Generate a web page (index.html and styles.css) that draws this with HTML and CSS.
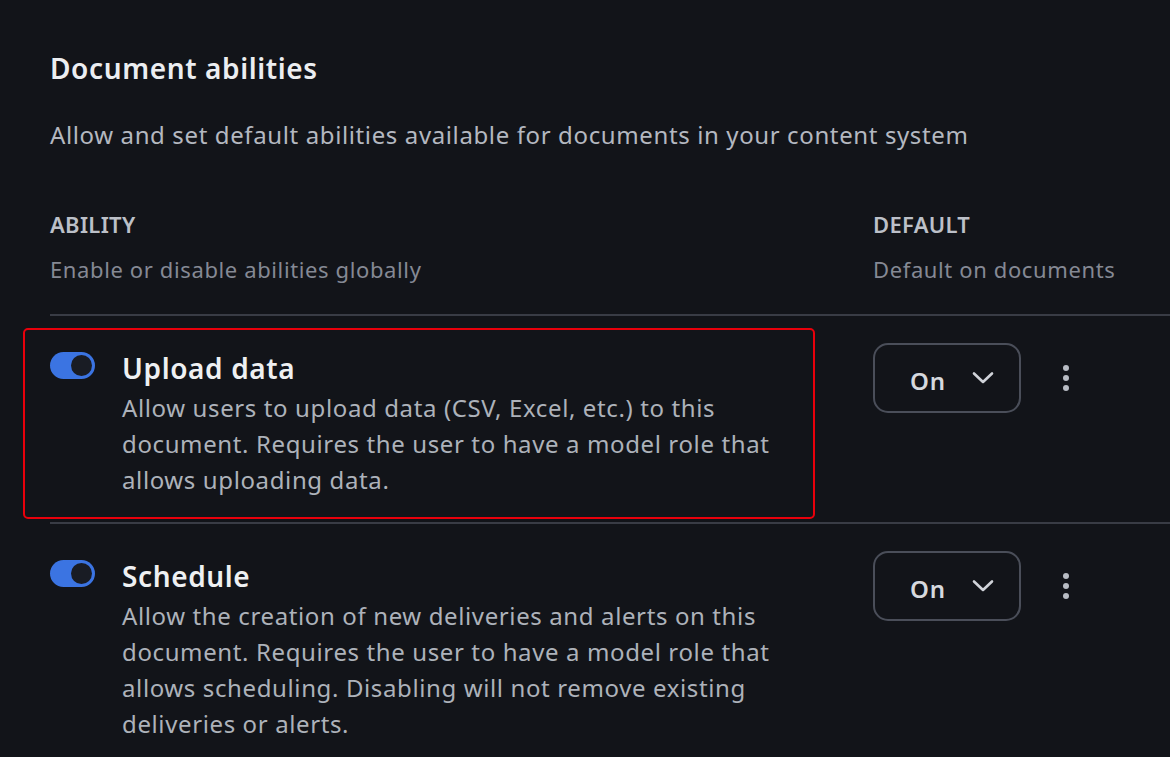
FILE: index.html
```html
<!DOCTYPE html>
<html lang="en">
  <head>
    <meta charset="UTF-8" />
    <meta name="viewport" content="width=device-width, initial-scale=1.0" />
    <title>Document abilities</title>
    <link rel="stylesheet" href="styles.css">
  </head>
  <body>
    <section class="settings">
      <h1 class="settings-title">Document abilities</h1>
      <p class="settings-intro">Allow and set default abilities available for documents in your content system</p>

      <div class="table-head">
        <div class="col-ability">
          <div class="head-label">ABILITY</div>
          <div class="head-hint">Enable or disable abilities globally</div>
        </div>
        <div class="col-default">
          <div class="head-label">DEFAULT</div>
          <div class="head-hint">Default on documents</div>
        </div>
      </div>

      <!-- ability rows -->
      <div class="ability-row">
        <div class="col-ability ability-main is-highlighted">
          <span class="toggle on"><span class="knob"></span></span>
          <div class="ability-text">
            <h3>Upload data</h3>
            <p>Allow users to upload data (CSV, Excel, etc.) to this document. Requires the user to have a model role that allows uploading data.</p>
          </div>
        </div>
        <div class="col-default ability-default">
          <button class="select">
            <span>On</span>
            <svg width="22" height="14" viewBox="0 0 22 14"><path d="M2 2.5 L11 11 L20 2.5" fill="none" stroke="currentColor" stroke-width="2.6" stroke-linecap="round" stroke-linejoin="round"/></svg>
          </button>
          <span class="kebab"><i></i><i></i><i></i></span>
        </div>
      </div>

      <div class="ability-row">
        <div class="col-ability ability-main">
          <span class="toggle on"><span class="knob"></span></span>
          <div class="ability-text">
            <h3>Schedule</h3>
            <p>Allow the creation of new deliveries and alerts on this document. Requires the user to have a model role that allows scheduling. Disabling will not remove existing deliveries or alerts.</p>
          </div>
        </div>
        <div class="col-default ability-default">
          <button class="select">
            <span>On</span>
            <svg width="22" height="14" viewBox="0 0 22 14"><path d="M2 2.5 L11 11 L20 2.5" fill="none" stroke="currentColor" stroke-width="2.6" stroke-linecap="round" stroke-linejoin="round"/></svg>
          </button>
          <span class="kebab"><i></i><i></i><i></i></span>
        </div>
      </div>
    </section>
  </body>
</html>
```

FILE: styles.css
```css
body {
  margin: 0;
  background-color: #121419;
  font-family: "Noto Sans", "Open Sans", sans-serif;
  letter-spacing: 0.62px;
  color: #e8eaed;
  overflow: hidden;
}

.settings {
  padding: 48px 0 0 50px;
}

.settings-title {
  margin: 0;
  font-size: 28px;
  line-height: 40px;
  font-weight: 600;
  color: #eceef1;
}

.settings-intro {
  margin: 29px 0 0 0;
  font-size: 24px;
  line-height: 36px;
  color: #b4b8c0;
}

.table-head,
.ability-row {
  display: grid;
  grid-template-columns: 823px 1fr;
}

.table-head {
  margin-top: 53px;
  padding-bottom: 27px;
  border-bottom: 2px solid #393c45;
}

.head-label {
  font-size: 22px;
  line-height: 36px;
  font-weight: 600;
  letter-spacing: 0.3px;
  color: #bcc0c8;
}

.head-hint {
  margin-top: 9px;
  font-size: 22px;
  line-height: 36px;
  color: #858994;
}

.ability-row {
  border-bottom: 2px solid #393c45;
}

.ability-main {
  display: flex;
  gap: 27px;
  padding: 34px 0 24px 0;
  position: relative;
}

/* red focus frame drawn over the active row */
.is-highlighted::after {
  content: "";
  position: absolute;
  left: -27px;
  top: 12px;
  right: 58px;
  bottom: 3px;
  border: 2px solid #e8000b;
  border-radius: 5px;
}

.toggle {
  flex: none;
  width: 45px;
  height: 27px;
  margin-top: 2px;
  border-radius: 14px;
  background-color: #3b74e2;
  display: flex;
  align-items: center;
  justify-content: flex-end;
  padding: 0 3px;
  box-sizing: border-box;
}

.toggle .knob {
  width: 21px;
  height: 21px;
  border-radius: 50%;
  background-color: #191c24;
}

.ability-text h3 {
  margin: 0;
  font-size: 28px;
  line-height: 36px;
  font-weight: 600;
  color: #eef0f2;
}

.ability-text p {
  margin: 4px 0 0 0;
  max-width: 670px;
  font-size: 24px;
  line-height: 36px;
  color: #adb2ba;
}

.ability-default {
  display: flex;
  align-items: center;
  align-self: start;
  gap: 42px;
  padding-top: 27px;
}

.select {
  width: 148px;
  height: 70px;
  border: 2px solid #4a4e59;
  border-radius: 15px;
  background-color: transparent;
  color: #d6d9de;
  font-family: inherit;
  font-size: 24px;
  font-weight: 600;
  letter-spacing: 0.8px;
  display: flex;
  align-items: center;
  justify-content: center;
  gap: 26px;
  padding: 4px 0 0 10px;
}

.select svg {
  color: #d0d3d9;
  margin-top: -4px;
}

.kebab {
  display: flex;
  flex-direction: column;
  gap: 4px;
}

.kebab i {
  width: 6px;
  height: 6px;
  border-radius: 50%;
  background-color: #b8bcc4;
}
```
